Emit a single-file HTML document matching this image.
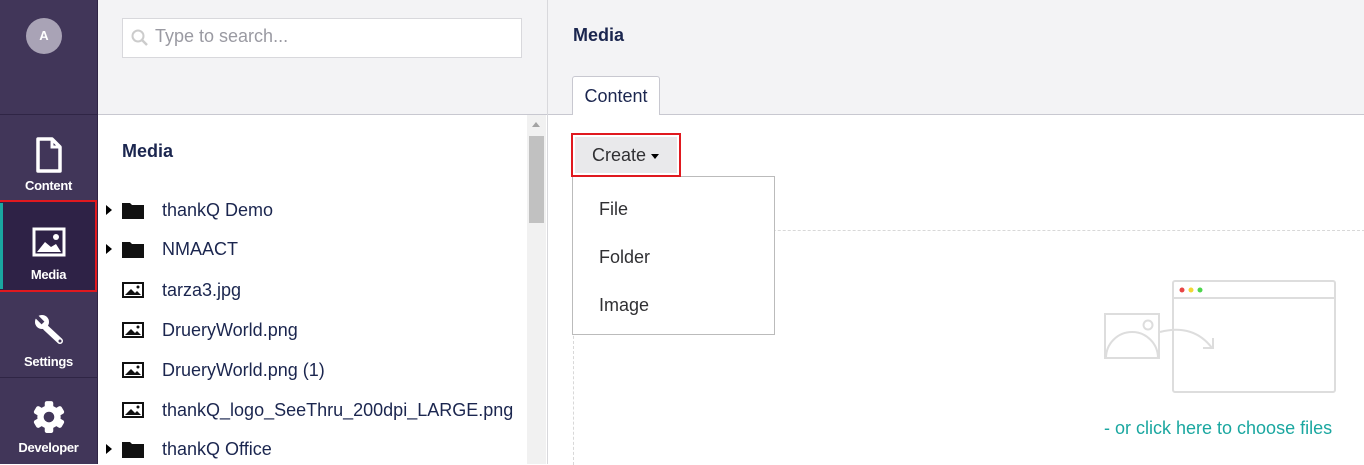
<!DOCTYPE html><html><head><style>
body{margin:0;width:1364px;height:464px;overflow:hidden;font-family:"Liberation Sans",sans-serif;position:relative;background:#fff}
.a{position:absolute}
.nav{left:0;top:0;width:97px;height:464px;background:#413659;border-right:1px solid #2f2545}
.ni{position:absolute;left:0;width:97px;color:#fff;font-size:13px;font-weight:bold;text-align:center;letter-spacing:-0.3px}
.sep{position:absolute;left:0;width:97px;height:1px;background:#2f2545}
.tree{font-size:18px;color:#1b264f}
.row{position:absolute;left:106px;height:24px;display:flex;align-items:center}
.tri{width:0;height:0;border-left:6px solid #000;border-top:5px solid transparent;border-bottom:5px solid transparent;margin-right:10px}
.ic{width:22px;margin-right:18px}
</style></head><body>
<div class="a nav">
 <div class="a" style="left:26px;top:18px;width:36px;height:36px;border-radius:50%;background:#a9a3b6;color:#fff;font-size:13px;font-weight:bold;text-align:center;line-height:36px">A</div>
 <div class="sep" style="top:114px"></div>
 <div class="ni" style="top:137px"><svg width="28" height="36" viewBox="0 0 28 36"><path d="M3 2h14l8 8v24H3z" fill="none" stroke="#fff" stroke-width="3.5" stroke-linejoin="round"/><path d="M17 2v8h8" fill="none" stroke="#fff" stroke-width="3"/></svg><div style="margin-top:2px">Content</div></div>
 <div class="a" style="left:0;top:200px;width:97px;height:92px;background:#2e2246;box-sizing:border-box;border:2px solid #e0191f;border-left:none"></div>
 <div class="a" style="left:0;top:203px;width:3px;height:86px;background:#1aa7a0"></div>
 <div class="ni" style="top:227px"><svg width="34" height="30" viewBox="0 0 34 30"><rect x="2" y="2" width="30" height="26" fill="none" stroke="#fff" stroke-width="3"/><path d="M5 25 L13 15 L19 20 L24 17 L29 25Z" fill="#fff"/><circle cx="24" cy="10" r="3" fill="#fff"/></svg><div style="margin-top:7px">Media</div></div>
 <div class="ni" style="top:312px"><svg width="36" height="36" viewBox="0 0 36 36"><path d="M9 8 L15 16 L29 29" fill="none" stroke="#fff" stroke-width="6" stroke-linecap="round"/><circle cx="11" cy="10" r="7" fill="#fff"/><path d="M4 3 l8 8" stroke="#413659" stroke-width="4"/><circle cx="29" cy="29" r="1.5" fill="#413659"/></svg><div style="margin-top:3px">Settings</div></div>
 <div class="sep" style="top:377px"></div>
 <div class="ni" style="top:400px"><svg width="34" height="34" viewBox="0 0 32 32"><g fill="#fff"><circle cx="16" cy="16" r="11"/><rect x="12" y="1" width="8" height="30" rx="2"/><rect x="12" y="1" width="8" height="30" rx="2" transform="rotate(60 16 16)"/><rect x="12" y="1" width="8" height="30" rx="2" transform="rotate(120 16 16)"/></g><circle cx="16" cy="16" r="5" fill="#413659"/></svg><div style="margin-top:3px">Developer</div></div>
</div>
<div class="a" style="left:98px;top:0;width:449px;height:114px;background:#f3f3f5;border-bottom:1px solid #c8c8d0"></div>
<div class="a" style="left:122px;top:18px;width:398px;height:38px;background:#fff;border:1px solid #d8d8dc"></div>
<svg class="a" style="left:130px;top:28px" width="20" height="20"><circle cx="8" cy="8" r="5.5" fill="none" stroke="#ccc" stroke-width="2"/><path d="M12 12l5 5" stroke="#ccc" stroke-width="2.5"/></svg>
<div class="a" style="left:155px;top:26px;font-size:18px;color:#9a9aa2">Type to search...</div>
<div class="a" style="left:122px;top:141px;font-size:18px;font-weight:bold;color:#1b264f">Media</div>
<div class="a" style="left:527px;top:115px;width:19px;height:349px;background:#f1f1f1"></div>
<div class="a" style="left:529px;top:136px;width:15px;height:87px;background:#c1c1c1"></div>
<div class="a" style="left:532px;top:122px;border-bottom:5px solid #a3a3a3;border-left:4px solid transparent;border-right:4px solid transparent"></div>
<div class="a" style="left:547px;top:0;width:1px;height:464px;background:#d8d8dc"></div>
<div class="tree">
<div class="row" style="top:198px"><div class="tri"></div><svg class="ic" width="22" height="18"><path d="M0 2h8l2 2h12v14H0z" fill="#111"/></svg>thankQ Demo</div>
<div class="row" style="top:237px"><div class="tri"></div><svg class="ic" width="22" height="18"><path d="M0 2h8l2 2h12v14H0z" fill="#111"/></svg>NMAACT</div>
<div class="row" style="top:278px;left:122px"><svg class="ic" width="22" height="16"><rect x="1" y="1" width="20" height="14" fill="none" stroke="#111" stroke-width="2"/><path d="M3 13l6-6 4 4 2-2 4 4z" fill="#111"/><circle cx="16" cy="5" r="1.5" fill="#111"/></svg>tarza3.jpg</div>
<div class="row" style="top:318px;left:122px"><svg class="ic" width="22" height="16"><rect x="1" y="1" width="20" height="14" fill="none" stroke="#111" stroke-width="2"/><path d="M3 13l6-6 4 4 2-2 4 4z" fill="#111"/><circle cx="16" cy="5" r="1.5" fill="#111"/></svg>DrueryWorld.png</div>
<div class="row" style="top:358px;left:122px"><svg class="ic" width="22" height="16"><rect x="1" y="1" width="20" height="14" fill="none" stroke="#111" stroke-width="2"/><path d="M3 13l6-6 4 4 2-2 4 4z" fill="#111"/><circle cx="16" cy="5" r="1.5" fill="#111"/></svg>DrueryWorld.png (1)</div>
<div class="row" style="top:398px;left:122px"><svg class="ic" width="22" height="16"><rect x="1" y="1" width="20" height="14" fill="none" stroke="#111" stroke-width="2"/><path d="M3 13l6-6 4 4 2-2 4 4z" fill="#111"/><circle cx="16" cy="5" r="1.5" fill="#111"/></svg>thankQ_logo_SeeThru_200dpi_LARGE.png</div>
<div class="row" style="top:437px"><div class="tri"></div><svg class="ic" width="22" height="18"><path d="M0 2h8l2 2h12v14H0z" fill="#111"/></svg>thankQ Office</div>
</div>
<div class="a" style="left:548px;top:0;width:816px;height:114px;background:#f3f3f5;border-bottom:1px solid #c8c8d0"></div>
<div class="a" style="left:573px;top:25px;font-size:18px;font-weight:bold;color:#1b264f">Media</div>
<div class="a" style="left:572px;top:76px;width:88px;height:39px;background:#fff;border:1px solid #c8c8d0;border-bottom:none;border-radius:3px 3px 0 0;box-sizing:border-box;font-size:18px;color:#1b264f;text-align:center;line-height:38px">Content</div>
<div class="a" style="left:573px;top:230px;width:791px;height:234px;border-top:1px dashed #d8d8d8;border-left:1px dashed #d8d8d8"></div>
<div class="a" style="left:572px;top:176px;width:203px;height:159px;background:#fff;border:1px solid #bbb;box-sizing:border-box;font-size:18px;color:#303033">
<div class="a" style="left:26px;top:22px">File</div><div class="a" style="left:26px;top:70px">Folder</div><div class="a" style="left:26px;top:118px">Image</div></div>
<div class="a" style="left:571px;top:133px;width:110px;height:44px;box-sizing:border-box;border:2px solid #e0191f;padding:2px"><div style="background:#e9e9eb;height:36px;font-size:18px;color:#303033;line-height:36px;padding-left:17px">Create <span style="display:inline-block;border-top:5px solid #000;border-left:4px solid transparent;border-right:4px solid transparent;vertical-align:middle"></span></div></div>
<svg class="a" style="left:1100px;top:278px" width="240" height="120"><g fill="none" stroke="#ddd" stroke-width="2"><rect x="73" y="3" width="162" height="111" rx="2"/><path d="M73 20h162"/><rect x="5" y="36" width="54" height="44"/><path d="M6 80a26 26 0 0 1 52 0"/><circle cx="48" cy="47" r="4.5"/><path d="M60 54c22-6 40 0 52 16M103 70h10v-10"/></g><circle cx="82" cy="12" r="2.5" fill="#e84545"/><circle cx="91" cy="12" r="2.5" fill="#f2d735"/><circle cx="100" cy="12" r="2.5" fill="#4cd64c"/></svg>
<div class="a" style="left:1104px;top:418px;font-size:18px;color:#1aa7a0">- or click here to choose files</div>
</body></html>
